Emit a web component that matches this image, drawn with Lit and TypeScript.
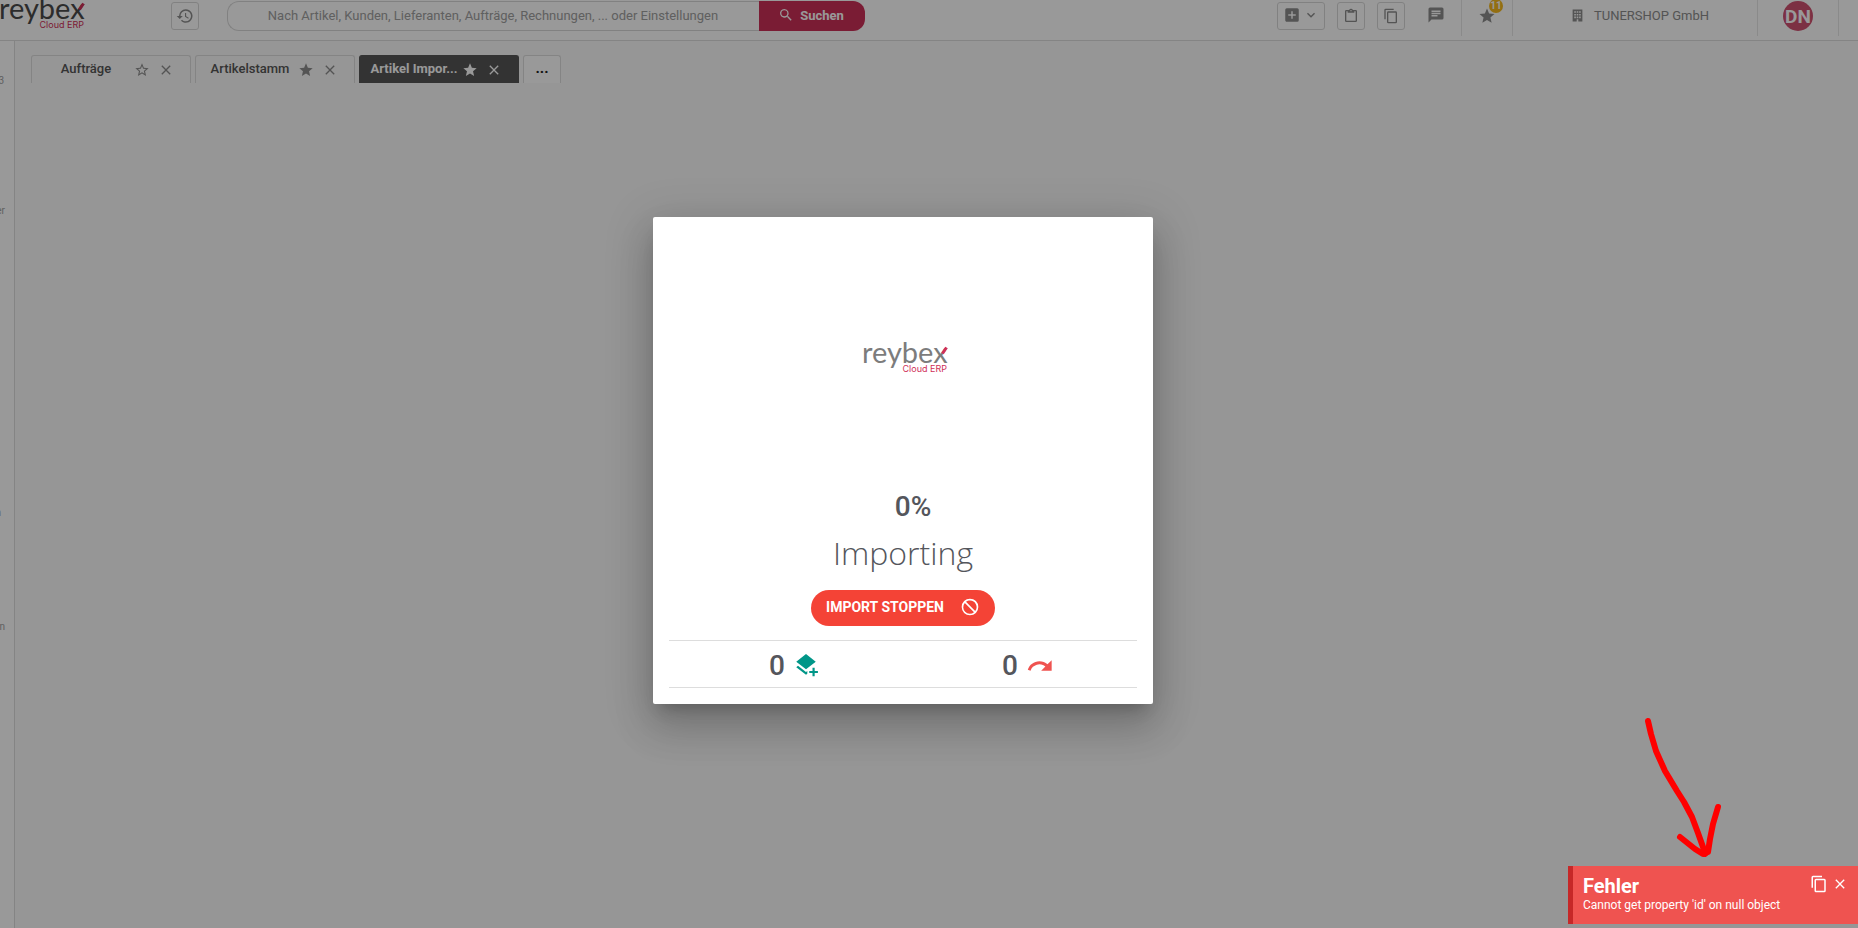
import { LitElement, html, css, svg } from "lit";
import { customElement, property } from "lit/decorators.js";

const ICONS: Record<string, string> = {
  history:
    "M13 3a9 9 0 0 0-9 9H1l4 4 4-4H6a7 7 0 1 1 7 7c-1.93 0-3.68-.79-4.94-2.06l-1.42 1.42A9 9 0 1 0 13 3zm-1 5v5l4.28 2.54.72-1.21-3.5-2.08V8z",
  search:
    "M9.5 3a6.5 6.5 0 0 1 4.94 10.73l.27.27h.79l5 5-1.5 1.5-5-5v-.79l-.27-.27A6.5 6.5 0 1 1 9.5 3m0 2a4.5 4.5 0 1 0 0 9 4.5 4.5 0 0 0 0-9z",
  plusBox:
    "M17 13h-4v4h-2v-4H7v-2h4V7h2v4h4m2-8H5a2 2 0 0 0-2 2v14c0 1.1.9 2 2 2h14a2 2 0 0 0 2-2V5a2 2 0 0 0-2-2z",
  chevron: "M7.41 8.58L12 13.17l4.59-4.59L18 10l-6 6-6-6z",
  clipboard:
    "M19 3h-4.18a3 3 0 0 0-5.64 0H5a2 2 0 0 0-2 2v14a2 2 0 0 0 2 2h14a2 2 0 0 0 2-2V5a2 2 0 0 0-2-2m-7 0a1 1 0 1 1 0 2 1 1 0 0 1 0-2M7 7h10V5h2v14H5V5h2z",
  copy:
    "M19 21H8V7h11m0-2H8a2 2 0 0 0-2 2v14a2 2 0 0 0 2 2h11a2 2 0 0 0 2-2V7a2 2 0 0 0-2-2m-3-4H4a2 2 0 0 0-2 2v14h2V3h12z",
  chat:
    "M20 2H4a2 2 0 0 0-2 2v18l4-4h14a2 2 0 0 0 2-2V4a2 2 0 0 0-2-2M6 9h12v2H6m8 3H6v-2h8m4-4H6V6h12",
  star:
    "M12 17.27L18.18 21l-1.64-7.03L22 9.24l-7.19-.62L12 2 9.19 8.62 2 9.24l5.45 4.73L5.82 21z",
  starOutline:
    "M12 15.39l-3.76 2.27.99-4.28-3.32-2.88 4.38-.37L12 6.09l1.71 4.04 4.38.37-3.32 2.88.99 4.28M22 9.24l-7.19-.61L12 2 9.19 8.63 2 9.24l5.45 4.73L5.82 21 12 17.27 18.18 21l-1.64-7.03z",
  close:
    "M19 6.41L17.59 5 12 10.59 6.41 5 5 6.41 10.59 12 5 17.59 6.41 19 12 13.41 17.59 19 19 17.59 13.41 12z",
  building:
    "M3 1h18v22H3zm3 3v3h3V4zm4.5 0v3h3V4zM15 4v3h3V4zM6 9v3h3V9zm4.5 0v3h3V9zM15 9v3h3V9zM6 14v3h3v-3zm4.5 0v3h3v-3zM15 14v3h3v-3zm-4.5 5v4h3v-4z",
  cancel:
    "M12 2a10 10 0 1 1 0 20 10 10 0 0 1 0-20m0 2.2c-1.85 0-3.5.6-4.8 1.6l11 11A7.8 7.8 0 0 0 12 4.2m4.8 14l-11-11A7.8 7.8 0 0 0 16.800 18.2z",
  layersPlus:
    "M12 1l9 7-9 7-9-7zM4.6 11.8L3 13.1l9 7 1.2-1v-2.5l-1.2 1zM18 13.5v3h-3v2h3v3h2v-3h3v-2h-3v-3z",
  redo:
    "M18.4 10.6C16.55 9 14.15 8 11.5 8c-4.65 0-8.58 3.03-9.96 7.22L3.9 16a8 8 0 0 1 12.72-3.62L13 16h9V7z",
};

@customElement("rx-icon")
export class RxIcon extends LitElement {
  @property() name = "";
  @property({ type: Number }) size = 16;

  static styles = css`
    :host {
      display: inline-flex;
      flex: none;
    }
    svg {
      display: block;
      fill: currentColor;
    }
  `;

  render() {
    return html`<svg
      width=${this.size}
      height=${this.size}
      viewBox="0 0 24 24"
      aria-hidden="true"
    >
      ${svg`<path fill-rule="evenodd" d=${ICONS[this.name] ?? ""} />`}
    </svg>`;
  }
}

@customElement("rx-logo")
export class RxLogo extends LitElement {
  static styles = css`
    :host {
      display: block;
      color: #4a4a4a;
    }
    svg {
      display: block;
      overflow: visible;
    }
    .word {
      font: 400 29px Lato, sans-serif;
      fill: currentColor;
    }
    .sub {
      font: 400 9px Inter, sans-serif;
      fill: #cf2f58;
    }
    .accent {
      stroke: #cf2f58;
      stroke-width: 3;
    }
  `;

  render() {
    return html`<svg width="84" height="32" viewBox="0 0 84 32" role="img" aria-label="reybex Cloud ERP">
      <text class="word" x="-1" y="21">reybex</text>
      <text class="sub" x="84" y="30" text-anchor="end">Cloud ERP</text>
      <path class="accent" d="M79.5 11.5L83.5 5.5" />
    </svg>`;
  }
}

interface Tab {
  label: string;
  starred: boolean;
  active?: boolean;
}

@customElement("app-root")
export class AppRoot extends LitElement {
  private tabs: Tab[] = [
    { label: "Aufträge", starred: false },
    { label: "Artikelstamm", starred: true },
    { label: "Artikel Impor...", starred: true, active: true },
  ];

  static styles = css`
    :host {
      display: block;
      position: relative;
      height: 100vh;
      overflow: hidden;
      font-family: Roboto, sans-serif;
      font-size: 13px;
      color: #54565c;
      background: #fafafa;
    }
    * {
      box-sizing: border-box;
    }
    button {
      font: inherit;
      color: inherit;
      background: none;
      border: 0;
      padding: 0;
      display: inline-flex;
      align-items: center;
      justify-content: center;
      cursor: pointer;
    }
    .page {
      display: flex;
      flex-direction: column;
      height: 100%;
    }
    .header {
      display: flex;
      align-items: flex-start;
      flex: none;
      height: 41px;
      background: #fff;
      border-bottom: 1px solid #dcdcdc;
      color: #8c8c8c;
    }
    .brand {
      width: 171px;
      flex: none;
      margin-top: -2px;
    }
    .box {
      height: 28px;
      min-width: 28px;
      margin-top: 2px;
      border: 1px solid #d8d8d8;
      border-radius: 3px;
      flex: none;
    }
    .search {
      display: flex;
      flex: 0 1 638px;
      height: 30px;
      margin: 1px 28px 0;
    }
    .search input {
      flex: 1;
      min-width: 0;
      border: 1px solid #d8d8d8;
      border-right: 0;
      border-radius: 12px 0 0 12px;
      background: #fff;
      font: inherit;
      text-align: center;
      padding: 0 0 2px 12px;
    }
    .search input::placeholder {
      color: #a0a0a0;
      opacity: 1;
    }
    .search button {
      width: 106px;
      gap: 6px;
      padding: 0 2px 2px 0;
      border-radius: 0 12px 12px 0;
      background: #cc2f57;
      color: #fff;
      font-weight: 700;
    }
    .tools {
      display: flex;
      margin-left: auto;
      padding-right: 19px;
      flex: none;
    }
    .actions {
      display: flex;
      gap: 12px;
    }
    .add {
      width: 48px;
      gap: 2px;
      padding-bottom: 2px;
    }
    .cell {
      display: flex;
      align-items: center;
      justify-content: center;
      height: 36px;
      padding-bottom: 4px;
      border-right: 1px solid #e6e6e6;
    }
    .chat {
      width: 57px;
      padding-left: 6px;
      padding-bottom: 6px;
    }
    .fav {
      width: 51px;
    }
    .fav button {
      position: relative;
    }
    .badge {
      position: absolute;
      left: 11px;
      top: -8px;
      width: 14px;
      height: 14px;
      border-radius: 50%;
      background: #f5b81e;
      color: #fff;
      font-size: 10px;
      font-weight: 700;
      line-height: 14px;
      text-align: center;
    }
    .company {
      width: 245px;
      gap: 10px;
      padding-left: 10px;
      padding-bottom: 6px;
    }
    .user {
      width: 81px;
    }
    .avatar {
      width: 30px;
      height: 30px;
      border-radius: 50%;
      background: #cf5070;
      color: #fff;
      font-size: 19px;
      font-weight: 700;
    }
    .body {
      display: flex;
      flex: 1;
      min-height: 0;
    }
    .side {
      display: flex;
      flex-direction: column;
      width: 15px;
      flex: none;
      padding-top: 33px;
      border-right: 1px solid #dcdcdc;
      background: #fff;
      overflow: hidden;
      font-size: 10px;
      line-height: 14px;
      color: #a0a0a0;
    }
    .side span {
      display: flex;
      justify-content: flex-end;
      width: 5px;
      flex: none;
    }
    .side .s1 {
      width: 4px;
      height: 130px;
    }
    .side .s2 {
      height: 302px;
    }
    .side .s3 {
      width: 1px;
      height: 114px;
    }
    .tabs {
      display: flex;
      gap: 4px;
      padding: 14px 16px;
      flex: 1;
    }
    .tab {
      display: flex;
      align-items: center;
      width: 160px;
      height: 28px;
      padding: 0 16px 0 6px;
      border: 1px solid #dcdcdc;
      border-bottom: 0;
      border-radius: 3px 3px 0 0;
      font-weight: 500;
      color: #8c8c8c;
    }
    .tab .title {
      flex: 1;
      padding-bottom: 2px;
      text-align: center;
      color: #555;
      white-space: nowrap;
    }
    .tab button + button {
      margin-left: 8px;
    }
    .tab.active {
      background: #555;
      border-color: #555;
      color: #fff;
    }
    .tab.active .title {
      color: #fff;
      font-weight: 700;
    }
    .more {
      width: 38px;
      height: 28px;
      padding-bottom: 3px;
      border: 1px solid #dcdcdc;
      border-bottom: 0;
      border-radius: 3px 3px 0 0;
      background: #fff;
      color: #222;
      font-size: 15px;
      font-weight: 700;
    }
    .overlay {
      position: absolute;
      inset: 0;
      display: flex;
      align-items: center;
      justify-content: center;
      padding: 0 52px 7px 0;
      background: rgba(0, 0, 0, 0.4);
    }
    .dialog {
      display: flex;
      flex-direction: column;
      align-items: center;
      width: 500px;
      padding: 124px 16px 16px;
      border-radius: 2px;
      background: #fff;
      box-shadow: 0 11px 15px -7px rgba(0, 0, 0, 0.2),
        0 24px 38px 3px rgba(0, 0, 0, 0.14), 0 9px 46px 8px rgba(0, 0, 0, 0.12);
    }
    .dialog rx-logo {
      color: #7c7c7c;
      margin: 1px 0 0 4px;
    }
    .percent {
      margin: 115px 0 0 20px;
      font-size: 28px;
      font-weight: 500;
      line-height: 36px;
    }
    .status {
      margin: 6px 0 0;
      font: 300 32px/44px "Open Sans", sans-serif;
    }
    .stop {
      width: 184px;
      height: 36px;
      margin: 15px 0 14px;
      padding-bottom: 2px;
      gap: 16px;
      border-radius: 18px;
      background: #f44336;
      color: #fff;
      font-size: 14px;
      font-weight: 700;
    }
    .counts {
      display: flex;
      align-self: stretch;
      height: 48px;
      border-top: 1px solid #ddd;
      border-bottom: 1px solid #ddd;
    }
    .count {
      display: flex;
      flex: 1;
      align-items: center;
      justify-content: center;
      gap: 8px;
      padding: 3px 0 0 16px;
      font-size: 28px;
      font-weight: 500;
    }
    .new {
      color: #009688;
    }
    .skip {
      color: #ef5350;
    }
    .toast {
      position: absolute;
      right: 0;
      bottom: 4px;
      display: flex;
      width: 290px;
      height: 58px;
      padding: 8px 10px 0 10px;
      border-left: 5px solid #c62828;
      background: #ef5350;
      color: #fff;
    }
    .toast .text {
      flex: 1;
    }
    .toast h2 {
      margin: 0;
      font-size: 20px;
      font-weight: 700;
      line-height: 24px;
    }
    .toast p {
      margin: 0;
      font-size: 12px;
      line-height: 14px;
    }
    .toast .icons {
      display: flex;
      align-items: center;
      height: 20px;
      gap: 4px;
    }
    .mark {
      position: absolute;
      right: 130px;
      bottom: 66px;
      fill: none;
      stroke: #f00;
      stroke-width: 6;
      stroke-linecap: round;
      stroke-linejoin: round;
    }
  `;

  private renderTab(tab: Tab) {
    return html`<div class="tab ${tab.active ? "active" : ""}">
      <span class="title">${tab.label}</span>
      <button aria-label="Favorit">
        <rx-icon name=${tab.starred ? "star" : "starOutline"} size="16"></rx-icon>
      </button>
      <button aria-label="Schließen"><rx-icon name="close" size="16"></rx-icon></button>
    </div>`;
  }

  render() {
    return html`
      <div class="page">
        <header class="header">
          <div class="brand"><rx-logo></rx-logo></div>
          <button class="box" aria-label="Verlauf"><rx-icon name="history" size="18"></rx-icon></button>
          <form class="search" @submit=${(e: Event) => e.preventDefault()}>
            <input
              type="search"
              aria-label="Suche"
              placeholder="Nach Artikel, Kunden, Lieferanten, Aufträge, Rechnungen, ... oder Einstellungen"
            />
            <button><rx-icon name="search" size="16"></rx-icon>Suchen</button>
          </form>
          <div class="tools">
            <div class="actions">
              <button class="box add" aria-label="Neu">
                <rx-icon name="plusBox" size="18"></rx-icon><rx-icon name="chevron" size="16"></rx-icon>
              </button>
              <button class="box" aria-label="Zwischenablage"><rx-icon name="clipboard" size="16"></rx-icon></button>
              <button class="box" aria-label="Kopieren"><rx-icon name="copy" size="16"></rx-icon></button>
            </div>
            <div class="cell chat">
              <button aria-label="Nachrichten"><rx-icon name="chat" size="18"></rx-icon></button>
            </div>
            <div class="cell fav">
              <button aria-label="Favoriten">
                <rx-icon name="star" size="18"></rx-icon><span class="badge">11</span>
              </button>
            </div>
            <div class="cell company">
              <rx-icon name="building" size="13"></rx-icon><span>TUNERSHOP GmbH</span>
            </div>
            <div class="cell user"><button class="avatar">DN</button></div>
          </div>
        </header>
        <div class="body">
          <nav class="side">
            <span class="s1">3</span><span class="s2">er</span><span class="s3">n</span><span>n</span>
          </nav>
          <div class="tabs">
            ${this.tabs.map((t) => this.renderTab(t))}
            <button class="more" aria-label="Weitere Tabs">...</button>
          </div>
        </div>
      </div>
      <div class="overlay">
        <section class="dialog" role="dialog" aria-label="Import">
          <rx-logo></rx-logo>
          <p class="percent">0%</p>
          <p class="status">Importing</p>
          <button class="stop">IMPORT STOPPEN<rx-icon name="cancel" size="20"></rx-icon></button>
          <div class="counts">
            <div class="count">0<rx-icon class="new" name="layersPlus" size="26"></rx-icon></div>
            <div class="count">0<rx-icon class="skip" name="redo" size="28"></rx-icon></div>
          </div>
        </section>
      </div>
      <svg class="mark" width="90" height="150" viewBox="1638 712 90 150" aria-hidden="true">
        <path d="M1648 721L1651 734 1656 751 1665 771 1677 791 1684 802 1692 817 1698 833 1703 847 1705 854" />
        <path d="M1680 837L1695 849 1703 854 1708 852 1710 839 1713 824 1718 807" />
      </svg>
      <aside class="toast" role="alert">
        <div class="text">
          <h2>Fehler</h2>
          <p>Cannot get property 'id' on null object</p>
        </div>
        <div class="icons">
          <button aria-label="Kopieren"><rx-icon name="copy" size="18"></rx-icon></button>
          <button aria-label="Schließen"><rx-icon name="close" size="16"></rx-icon></button>
        </div>
      </aside>
    `;
  }
}
